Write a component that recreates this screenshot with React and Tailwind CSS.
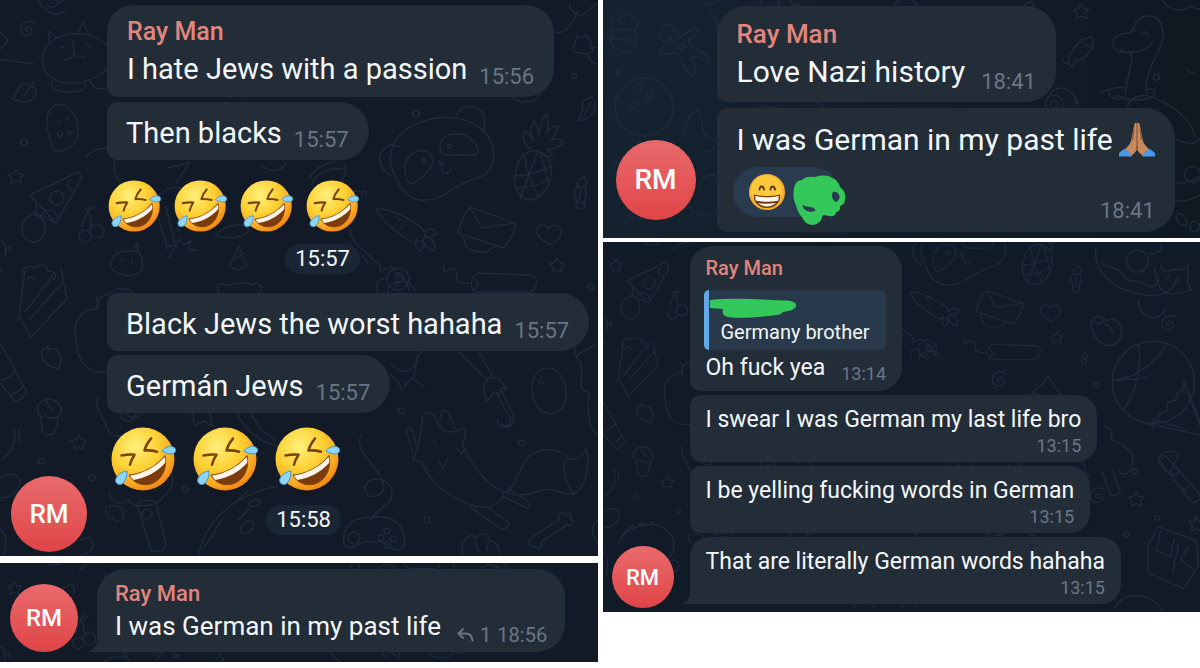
import React from "react";

const STAR = "M0-8l2.4 4.6 5.2.6-3.6 3.7 1.2 5.4L0 4 -5 6.3 -4.2 1.1 -8-2.6l5.4-1z";
const SWIRL = "M1 1c-3 1-4-4 0-4s6 6 1 8-10-2-8-8S3-10 7-7";

function Star({ x, y }) {
  return <path d={STAR} transform={`translate(${x} ${y})`} />;
}

function Swirl({ x, y }) {
  return <path d={SWIRL} transform={`translate(${x} ${y})`} />;
}

function Doodles() {
  return (
    <>
      <path d="M38-2c4 14 18 20 28 12M46 4c5 5 10 4 15-4M52-2c8 6 14 4 14-2" />
      <Swirl x={27} y={30} />
      <path d="M-2 30l10 11-8 8M0 60c9-3 20 5 33 3" />
      <path d="M43 64c-3-16 9-28 27-30 20-2 38 6 41 19 2 14-13 28-35 30-18 1-31-5-33-19zM50 43l-2-12 9 6M78 33l5-11 6 13M63 59c6 2 10-1 11-6 2 4 7 6 12 3M74 53l-1-12" />
      <path d="M52 82c-4 8 10 11 20 10s16-3 13-9M90 80c2 8 9 10 18 8M59 48l4-1M86 45l4 1" />
      <path d="M12 99c6-4 4-12 12-15 5-1 12 3 12 9-1 8-10 12-24 6zM24 96c2-5 6-8 10-14" />
      <path d="M51 142c-6-16-6-32 4-37 12-3 24 10 23 28-2 13-14 21-24 17-6-4 0-4-3-8zM58 123l2-3M66 120l2-2M57 133l3 5 3-5M68 130l2 5 3-4" />
      <circle cx="24" cy="142" r="3" />
      <Star x={16} y={177} />
      <path d="M30 195l48-23c4 3 3 8 1 12l-23 39zM30 195c8 6 8 16 4 17l22 11M22 230c0-12 9-18 16-14 9 2 10 22-2 26-8 1-14-4-14-12zM70 180c-5 5-1 12 4 9M42 215c3-8 14-6 15 3" />
      <circle cx="57" cy="198" r="7" />
      <path d="M82 227c2-8 4-14 9-22M91 230c0-10 1-18-6-22M88 210l8-3" />
      <circle cx="85" cy="236" r="6" /><circle cx="97" cy="231" r="7" />
      <path d="M0 240c4 0 7 7 5 16M5 249l6-3-2 6M24 276c-6-8 8-12 11-8 6-6 14-2 12 3 10-1 10 7 6 9M27 280l3-4 5 4" />
      <path d="M111 262c2-9 12-12 22-11 7-1 11 9 9 18-4 8-17 9-26 3-4-2-6-6-5-10zM133 250l4-7 1 8M121 259l4 1M132 264v-5" />
      <path d="M167 249c-2-17-16-37-8-53 9-12 30-14 28 8-2 14-12 14-8 28M176 248l-10-42M168 258l6-8-6-5 9 1 2-8 4 7 8-4-3 7 8 2-8 2" />
      <path d="M230 266l9-20 8 20c-5 4-12 5-17 0zM233 259l11-5M115 160c-4 14 6 28 18 30M168 168l22-6-14 21M215 235c14-12 30-13 34-5-6 9-25 9-34 5z" />
      <path d="M86 157c8-9 16-10 24-8M0 272l2-4M230 98c6-5 14-5 18 0M260 163c8 10 20 10 26 0" />
      <path d="M19 315l6-44M19 315l12 22 36-38-6-30M19 315l-2 6M25 312l28-37M30 319l32-36" />
      <path d="M42 357c-2-9 5-11 9-8 7-2 13 8 8 20-8-2-14-4-17-12zM48 345v8M0 343l26 47c2 6-9 13-12 10L-4 378M2 380c4 0 12-5 13-12M12 394c5-1 10-5 11-9" />
      <path d="M77 345c-4-15-2-28 10-35 9 0 11-2 11-10 4-6 10-4 16-9 8-6 18-1 22 5M77 345c0 12 8 26 22 27l14-1M96 296c2 6 3 10 0 14" />
      <path d="M38 413c-2-8 3-14 11-14s14 8 12 15c-5 5-12 6-16 1-3 4-5 2-7-2zM40 416l3 17c3 3 10 2 12-1l4-16M47 400c0 8 4 5 6 12" />
      <Star x={79} y={443} />
      <circle cx="41" cy="461" r="3" /><circle cx="92" cy="478" r="3" /><circle cx="185" cy="489" r="3" />
      <path d="M14 427c3 14-2 26-12 32M19 428v14M0 478c8-6 18-4 20 2 0 12-10 18-20 18M0 530c8 4 6 14 4 28M80 540c6-4 14-2 13 6-2 8-10 8-15 12" />
      <path d="M97 398c-3 8 6 20 12 34M108 432c7 4 12 6 16 2M120 407c4 8 12 14 20 8 6-4 9-8 12-12M233 398c1 20 20 43 45 48M246 402c6 18 18 33 30 38" />
      <circle cx="128" cy="413" r="8" />
      <path d="M183 405l8 4 4 16 9-4 8 5-2-14 8-7" />
      <path d="M137 505c2-5 14-6 19-3l10 43c-1 6-10 8-15 5zM110 492c-2 14 16 12 18 8 8 10 30 6 36-4 8-6 10-16 7-24M106 510c-2 6 4 10 7 8 1 6 12 4 10-5 1-7-10-9-12-6-3-3-6 0-5 3z" />
      <circle cx="147" cy="514" r="5" />
      <path d="M198 558c5-32 30-62 80-72M204 548l18-28M238 500l10-9M238 520l14-14" />
      <ellipse cx="255" cy="503" rx="6" ry="3" transform="rotate(-20 255 503)" />
      <ellipse cx="247" cy="527" rx="8" ry="5" transform="rotate(-40 247 527)" />
      <path d="M218 284c5-2 9 3 12 1 8-3 16-2 22 0 5-5 12 1 8 7M218 284v8M378 291c-4-8 2-13 8-12M388 293c-2-14 22-16 27-2M395 288l4-5M407 284l2 6" />
      <path d="M396 177c-12-16-4-40 14-50 22-12 48-13 64-3 16 9 22 24 19 38-4 18-20 14-40 27-18 14-46 20-57-12zM391 175c-15-6-15-28 1-30 3 0 5 1 7 2M456 118c2-10 13-14 21-10 7 4 9 13 7 22" />
      <path d="M405 171c-1-13 8-22 20-20 8 2 10 11 5 18-6 6-11 13-19 15-4-1-6-6-6-13zM440 148c0-9 8-15 16-14 11-1 22 8 22 18-3 6-12 2-18 3-8 0-20 2-20-7zM438 161l6 2-3 3zM442 165c-2 9 6 11 9 4" />
      <circle cx="450" cy="146" r="2" /><circle cx="424" cy="161" r="2" /><circle cx="416" cy="114" r="3" />
      <path d="M516 170c4-16 14-22 24-18 10 3 14 16 10 27-3 13-14 24-24 20-9-3-14-14-10-29zM514 176c12 0 26-4 36-9M516 188c12-1 22-2 31-8M524 153c2 14 6 28 14 43M540 153c4 10 6 20 8 28M520 199c6-14 10-30 18-47" />
      <path d="M531 149c-8-5-8-12-6-18 3 2 6 5 8 10-4-10-1-16 1-20 3 5 5 10 5 16 0-10 3-18 7-23 3 7 3 12 0 20 3-6 7-8 12-8 0 7-4 10-7 14 4-2 9-1 13 2-6 6-10 7-17 7l6 6c-6 3-10 1-13-4" />
      <path d="M579 180l5-3 3 5-2 5c2 5 2 8-1 14l1 7-6 1-3-3 1-5c-4-6-3-9 0-14zM577 187h8M576 202l8 1M581 189l-2 11" />
      <path d="M376 209c6-1 22 3 39 14 8 5 12 11 9 15-3 6-12 5-21-2-14-9-23-19-27-27zM395 216l5 4M404 225l-4 4M385 221l3 4M424 232c6-6 13-2 13 2-8 3-7 1-11 3 8 1 10 8 8 14-7-2-9-5-11-11 0 6 0 10-4 11-5-5-4-9-2-13" />
      <path d="M470 207l45 16c1 7-8 22-12 25l-45-15c1-7 9-24 12-26zM470 207l12 21 33-5M464 236c-1 6 2 12 6 14 11 4 20 2 26-5" />
      <path d="M549 245c-8-6-14-11-12-17 4-6 10-3 11 1 5-6 12-4 13 1 1 8-6 13-12 15z" />
      <Star x={557} y={266} />
      <path d="M477 273l54 2c8 2 7 12 0 17h-56c-6-6-4-15 2-19zM475 279c4 2 3 10-1 11M469 283c-6 1-14 0-12-8 1-6-6-8-9-4-3 2-6-2-4-6" />
      <path d="M350 228c-2 14 18 24 24 33l5 2 2 8c6-4 10-6 14-1 0 6 8 6 12 12M362 255l6 8M346 198c3-6 8-9 14-6" />
      <circle cx="398" cy="279" r="11" /><path d="M398 279c-5-3-1-7 3-5 6 3 1 10-5 8" />
      <path d="M309 178c8-12 18-15 26-17M312 184c6-13 18-16 30-15M344 164c4 8 0 14-4 20" />
      <path d="M576 40l1-4 4 2 5-3 5 7 2 10-7 2-12-2c-3-4 1-8 2-12zM589 48l12-1M588 54c0 8 8 10 12 10M555 32c10 3 18-8 22-20M570 4c-2 4 6 12 12 11 8-4 12-12 16-12" />
      <path d="M578 121l5-13c-2-9 4-9 8-11 8 6 4 18-6 22zM584 116l7-14M513 97c2 4 8 6 14 4 6 2 10-1 12-7" />
      <circle cx="574" cy="76" r="2.500" /><circle cx="364" cy="194" r="2.500" />
      <path d="M459 352l28 28 5-5-13-23M487 380l-4 8 4 13 5-6 2-3 6 2 2-6 5 1-8-10-9-2M497 394l13 24c3 8-5 10-9 6M502 391l11 24c3 10-5 14-11 12-4-2-5-4-4-8" />
      <ellipse cx="549" cy="391" rx="17" ry="23" transform="rotate(-8 549 391)" />
      <path d="M538 384l3-7M540 384l5-2M576 356l20-12M576 340c-3 8-1 18 4 21 4 10-1 20 2 28 8 6 8-2 6 12 0 20 4 34 12 34" />
      <path d="M391 363c6 12 22 10 24 0s10-10 9-20M390 374c4 6 10 6 12 18M404 388l8-11 12 10M414 376l4-22" />
      <path d="M422 462l-9-2 5-14 4-24c1-12 7-12 12-5l9 14 9 1c8-2 10-4 14-3-2 8 0 12-4 15 10 22 24 40 42 48l-3 9c-8 6-20 9-29 4-22-7-40-19-50-43zM413 453c-4-12-7-22-6-25 5-2 8 7 9 18M440 421c0-10 4-12 8-9l7 17M439 461l4 7 4-8M457 448l4 6 3-4M434 441l2 4" />
      <path d="M469 506l31 22c7 2 10-2 8-6l-24-17M502 496l25 12c4 0 2-5-1-8l-18-11M504 492c12-2 13-22 25-36 14-9 30-9 40 3 9 2 14-4 17-10 4 14 1 38-12 45-12 1-22-9-39-2-10 4-20 4-31 0M566 460c-5 10 2 28 8 34" />
      <path d="M363 434c-8 8-1 18 7 28 14 18 20 28 6 34-10 3-15-8-7-15 10-5 22 2 23 10 2 16-20 20-22 30" />
      <path d="M355 520c20-5 36-4 44 4 5 8 9 20 2 25-8 4-14-6-20-7h-16c-7 1-16 10-20 3-4-6 0-19 10-25z" />
      <circle cx="354" cy="538" r="6" /><circle cx="387" cy="531" r="3" /><circle cx="381" cy="538" r="3" /><circle cx="393" cy="539" r="3" /><circle cx="387" cy="545" r="3" />
      <circle cx="427" cy="520" r="3" /><circle cx="522" cy="443" r="3" /><circle cx="401" cy="411" r="3" /><circle cx="591" cy="287" r="3" />
      <path d="M532 537l27-17c-2-6 4-10 6-5 5-4 8 1 5 4 6 1 3 8-3 6l-26 17c2 6-4 9-6 4-6 3-8-5-3-9zM462 558c-2-18 8-27 14-20 6-7 12-5 14 3 8 0 10 9 9 17M474 540c2 4 4 8 4 12M488 542l-1 8M598 520c-8 6-6 16 0 24" />
    </>
  );
}

function SeaDoodles() {
  return (
    <>
      <path d="M10 27c-6-7 3-11 6-6 2-9 12-10 13-2 8-2 8 6 3 10l2 8c0 10-6 15-13 15-9-1-15-8-13-16zM7 31c7-2 18-4 26 1M5 38c8 2 22 0 28 4" />
      <circle cx="66" cy="34" r="9" />
      <path d="M73 38c8 0 14-12 20-10 5 5-7 10-8 14 2 8 22 10 21 18-6 3-12-4-17-4 0 6 6 16 1 20-7 0-12-18-16-23-6-1-14 4-17-1-1-7 9-6 9-13M62 31l2 1M69 31l2-1M64 37c3 2 5 1 6-2" />
      <circle cx="78" cy="47" r="3" /><circle cx="15" cy="72" r="2" /><circle cx="41" cy="107" r="29" />
      <ellipse cx="35" cy="88" rx="3" ry="5" transform="rotate(30 35 88)" /><ellipse cx="46" cy="95" rx="3" ry="5" transform="rotate(30 46 95)" /><ellipse cx="31" cy="104" rx="3" ry="5" transform="rotate(40 31 104)" />
      <path d="M82 138c-4-14 6-26 14-29 4 8 0 24 10 28l8 4M102 151c6 0 8-2 10-4M10 172c-2-8 6-10 8-12M86 205c4 10 16 14 30 4M114 176c-10-4-18 2-18 12M102 2l13 24M105 4c7-2 12-4 18-8M24 214c8 8 16 4 22 0M158 0l-2 7M175 0v6M188 0c0 6 6 6 8 4" />
      <path d="M154 108c4-4 8-2 9 1l11-3M213 102l8 6M290 6c4-8 18-10 24 0M420 5l7-4 3 5M446 94c8-12 26-6 28 14" />
      <circle cx="450" cy="104" r="9" /><circle cx="450" cy="104" r="4" />
      <Star x={477} y={12} />
      <path d="M465 63c-3-10 12-26 23-26 3 8-4 22-17 24l-2 6-10-5zM477 39c1 5 4 7 9 7M459 62l-1-4" />
      <path d="M524 52c-10 2-20-6-13-15 6-5 12-3 16-5 4-12 10-17 20-16 10 2 13 14 11 24-4 18-18 28-16 52M524 52c8 2 0 18-2 34l-1 8M528 29l3 2M538 34c3-4 5-2 6 1M516 50c8 4 26 3 32-8M497 92c10-4 18-6 24-4M543 89c6-1 10 3 6 7-8 5-26 5-36-1M506 90c-4 5 2 8 10 9M523 107c2-8 10-12 18-12 24 6 46 24 50 42" />
      <circle cx="552" cy="77" r="3" /><circle cx="472" cy="101" r="2" />
      <path d="M558 0c8 14 22 10 28 6 6 4 8 2 12 4M582 69c4 2 5 6 8 4M562 130c10 12 30 20 36 4M562 182c12 2 24 0 36-7M562 195c14 10 26 4 36-2" />
      <ellipse cx="577" cy="219" rx="4" ry="7" transform="rotate(-40 577 219)" /><circle cx="590" cy="226" r="5" /><circle cx="588" cy="174" r="8" />
    </>
  );
}

function PlayDoodles() {
  return (
    <>
      <path d="M492 6c-4 18 12 40 38 44 18 8 40 2 42-14M498 22c10 4 20 6 22 12 4 8 16 2 20 8 4 4 12 4 14-4" />
      <circle cx="533" cy="19" r="11" />
      <path d="M556 24l4 6c8-2 12-4 20-2l4-6-1 18 4 8-14 3c-10 4-20-4-20-14l-3-11M562 37l4-4M572 40l4-2M534 58c0 18 20 24 28 8M545 12c8 0 14-4 12-10" />
      <path d="M488 87c-6-14 10-16 14-8 8-6 16 2 15 12 0 16-24 18-29-4zM486 78l10 4 4-5M500 82c4 0 8 4 9 9" />
      <Swirl x={564} y={82} /><Swirl x={395} y={138} /><Swirl x={493} y={254} />
      <circle cx="549" cy="140" r="41" />
      <path d="M534 102c4 20-2 48-14 64M562 100c-8 20-30 36-54 38M508 138c16-2 30 0 36-4M579 138v10l-6 2-2 8-8 2v8l-8 4-1 6-6 2v7M579 138l20 55-58-12M584 150l14 36M548 176l30 10" />
      <path d="M426 158c2-10 8-14 12-16l6-9 5 10c6 4 9 12 9 22-10 4-24 2-32-7zM430 150c10 6 18 6 26 2M422 152v4" />
      <circle cx="480" cy="119" r="2.500" /><circle cx="492" cy="143" r="2.500" /><circle cx="530" cy="229" r="2.500" /><circle cx="522" cy="292" r="2.500" /><circle cx="553" cy="275" r="2.500" />
      <path d="M500 184c10 2 8 10 6 12 16 8 28 14 20 30-2 8-10 6-12 2M498 230l8 22c4 2 8 0 10-3l-8-22M554 217c2-8 14-12 20-4l-8 16c-4 2-10-6-12-12z" />
      <path d="M555 218l6-5 34 38c2 6-4 10-8 8zM566 232c4 2 8-1 9-5M578 246c4 0 7-2 8-5" />
      <Star x={532} y={257} />
      <path d="M544 302l10-18 38 14 2 24-14 24-36-16zM556 288l-4 20 14 6 4-18M574 302l-6 28M584 304l-8 12 12 10" />
      <Star x={592} y={282} />
      <path d="M18 296c8-14 40-24 52 0 4 16-8 26-20 26M16 300l4-8 3-4 6-5 4 2 5-5 5 3 8-4M248 366c4-10 20-10 22 0M296 366c6-10 14-8 16-2M510 366c6-16 36-20 48 2" />
    </>
  );
}

function Panel({ art, viewBox, className, children }) {
  return (
    <section className={`relative overflow-hidden ${className}`}>
      <svg
        aria-hidden="true"
        viewBox={viewBox}
        preserveAspectRatio="xMinYMin slice"
        className="absolute inset-0 h-full w-full fill-none stroke-[#1e2a39] stroke-[1.500]"
        strokeLinecap="round"
        strokeLinejoin="round"
      >
        {art}
      </svg>
      <div className="relative flex items-end">{children}</div>
    </section>
  );
}

function Avatar({ className }) {
  return (
    <div
      className={`flex shrink-0 items-center justify-center rounded-full bg-linear-to-b from-[#e96a6c] to-[#e04347] font-medium text-white ${className}`}
    >
      RM
    </div>
  );
}

function Name({ className }) {
  return <h2 className={`font-medium text-[#e2857c] ${className}`}>Ray Man</h2>;
}

function Bubble({ className, tail, children }) {
  return (
    <article className={`relative w-fit bg-[#222d38] whitespace-nowrap text-[#f4f7fa] ${className}`}>
      {tail && (
        <svg aria-hidden="true" viewBox="0 0 16 14" className="absolute bottom-0 -left-2 h-3.5 w-4 fill-[#222d38]">
          <path d="M8 0v4c0 4-3 7-8 9.500V14h16V0z" />
        </svg>
      )}
      {children}
    </article>
  );
}

function Time({ className, children }) {
  return <time className={`text-[#6a7684] ${className}`}>{children}</time>;
}

function Laugh({ className }) {
  return (
    <svg role="img" aria-label="Rolling on the floor laughing" viewBox="0 0 66 64" className={className}>
      <defs>
        <radialGradient id="face" cx="0.38" cy="0.3" r="0.75">
          <stop offset="0" stopColor="#fff07c" />
          <stop offset="0.5" stopColor="#fdd033" />
          <stop offset="0.8" stopColor="#f9a825" />
          <stop offset="1" stopColor="#ee7d12" />
        </radialGradient>
      </defs>
      <circle cx="32" cy="32" r="31.500" fill="url(#face)" />
      <g fill="none" stroke="#7a430f" strokeWidth="2.600" strokeLinecap="round" strokeLinejoin="round">
        <path d="M10.500 28.500c4.500-.8 9-1.200 13-.8-2 3-3.800 6.200-4.500 10" />
        <path d="M40 11.500c-3 3.500-5.500 8-6.500 12 4.500-.3 9 .2 12.500 1.200" />
      </g>
      <path d="M18 48C31 47 45 40 54 28.500c3 12-3 25-14 28.500-9 2.500-18-1-22-9z" fill="#7c3b0c" stroke="#8f4a0e" strokeWidth="1" />
      <path d="M19 48.500C31 47 45 40 53.500 30c1 2 1 4 .5 6C46 45 35 51 22.500 53c-1.500-1.300-2.800-2.800-3.500-4.500z" fill="#fff5e9" />
      <path d="M51 24c3-4 8-5.500 11.500-4 3.500 2 2.500 6-1 6.800-3.500.7-7.500-.6-10.500-2.800z" fill="#8fd3f5" stroke="#3f95c4" strokeWidth="1" />
      <path d="M16 44c-5 .5-10 4-11.300 8.500-.8 4.500 4.300 6.500 7.300 3.800 3-3 4.300-8 4-12.300z" fill="#8fd3f5" stroke="#3f95c4" strokeWidth="1" />
    </svg>
  );
}

function Beam() {
  return (
    <svg role="img" aria-label="Beaming face" viewBox="0 0 36 36" className="size-9">
      <circle cx="18" cy="18" r="18" fill="#f6b22f" />
      <circle cx="17.500" cy="16.500" r="15.500" fill="#fcc83c" />
      <path d="M10.500 15.500c.5-4 3.800-4 4.500 0M21.500 15.500c.5-4 3.800-4 4.500 0" fill="none" stroke="#5d3a12" strokeWidth="2" strokeLinecap="round" />
      <path d="M5 20.500c8 2 18 2 26 0 1 8-5 13.500-13 13.500S4 28.500 5 20.500z" fill="#6d3a10" />
      <path d="M6.300 22c7.500 1.700 16 1.700 23.400 0 .2 2-.2 3.500-.8 4.800-7 1.300-15 1.300-21.800 0-.6-1.300-1-2.800-.8-4.800zM9 29c6 1 12 1 18 0-5 4.500-13 4.500-18 0z" fill="#fff8ee" />
    </svg>
  );
}

function Pray() {
  return (
    <svg role="img" aria-label="Folded hands" viewBox="0 0 36 36" className="size-9">
      <path d="M15.500 2c.5-1.500 2-1.500 2.500-.3.500-1.200 2-1.200 2.500.3l3 15c.5 3 1.500 5 3.500 7l4 4.500-6 6c-3-2-6-4.500-7-7.500-1 3-4 5.500-7 7.500l-6-6L9 24c2-2 3-4 3.500-7z" fill="#c68a5c" />
      <path d="M18 2v20c0 2-.3 3.500-1 5M18 22c0 2 .3 3.500 1 5M15 7l-1.500 11M21 7l1.500 11" fill="none" stroke="#8f5a36" strokeWidth="1.200" />
      <path d="M5 27c3.500 1 6.500 4 8 7.500H0V31z M31 27c-3.500 1-6.500 4-8 7.500h13V31z" fill="#4a97e8" />
    </svg>
  );
}

function SmallPill({ className, children }) {
  return (
    <time className={`w-fit rounded-full bg-[#1b2635] px-2.5 text-[22px] leading-[30px] text-[#f4f7fa] ${className}`}>{children}</time>
  );
}

export default function App() {
  const line = "rounded-l-[10px] rounded-r-[29px] pr-5 pl-[19px] pt-[11px] pb-[7px] flex items-end gap-3";
  const wide = "rounded-l-[10px] rounded-r-[20px] px-4 pt-[9px] pb-1.5 flex flex-col";
  return (
    <main className="grid min-h-screen grid-cols-2 items-start gap-x-[5px] bg-white font-['Roboto','Liberation_Sans',sans-serif]">
      <div className="flex flex-col gap-[7px]">
        <Panel viewBox="0 0 598 556" className="bg-[#111a26] pt-[5px] pb-1" art={<Doodles />}>
          <Avatar className="mr-5 ml-[11px] size-[76px] text-[26px]" />
          <div className="flex flex-col pb-[17px]">
            <Bubble className="mb-[5px] rounded-[10px] rounded-tl-[26px] rounded-r-[28px] pt-[11px] pr-5 pb-2 pl-5">
              <Name className="text-[25px] leading-8" />
              <div className="flex items-end gap-3 pt-px">
                <p className="text-[29px] leading-10">I hate Jews with a passion</p>
                <Time className="text-[22px] leading-6">15:56</Time>
              </div>
            </Bubble>
            <Bubble className={line}>
              <p className="text-[29px] leading-10">Then blacks</p>
              <Time className="text-[22px] leading-[26px]">15:57</Time>
            </Bubble>
            <div className="mt-5 ml-px flex w-fit flex-col">
              <div className="flex gap-3">
                {[0, 1, 2, 3].map((n) => (
                  <Laugh key={n} className="h-[52px] w-[54px]" />
                ))}
              </div>
              <SmallPill className="mt-3 self-end">15:57</SmallPill>
            </div>
            <Bubble className={`mt-[19px] mb-1 ${line}`}>
              <p className="text-[29px] leading-10">Black Jews the worst hahaha</p>
              <Time className="text-[22px] leading-[26px]">15:57</Time>
            </Bubble>
            <Bubble className={line}>
              <p className="text-[29px] leading-10">Germán Jews</p>
              <Time className="text-[22px] leading-[26px]">15:57</Time>
            </Bubble>
            <div className="mt-3.5 ml-1 flex w-fit flex-col">
              <div className="flex gap-4">
                {[0, 1, 2].map((n) => (
                  <Laugh key={n} className="h-16 w-[66px]" />
                ))}
              </div>
              <SmallPill className="mt-3.5 self-end">15:58</SmallPill>
            </div>
          </div>
        </Panel>

        <Panel
          viewBox="0 0 598 101"
          className="bg-[#111a26] pt-1.5 pb-2.5"
          art={<g transform="translate(0 -137) scale(.92)"><Doodles /></g>}
        >
          <Avatar className="mr-[19px] ml-2.5 size-[68px] text-[24px]" />
          <Bubble tail className="rounded-[28px] rounded-bl-none pt-[11px] pr-[18px] pb-2 pl-[18px]">
            <Name className="text-[22px] leading-7" />
            <div className="flex items-end">
              <p className="text-[26px] leading-9">I was German in my past life</p>
              <span className="ml-4 flex items-center gap-1.5 text-[20px] leading-[18px] text-[#6a7684]">
                <svg aria-hidden="true" viewBox="0 0 17 14" className="h-3.5 w-[17px] fill-none stroke-current stroke-2" strokeLinecap="round" strokeLinejoin="round">
                  <path d="M6 1L1.500 5.500 6 10M2 5.500h7c4 0 6 3 6.500 7" />
                </svg>
                <span>1</span>
                <Time>18:56</Time>
              </span>
            </div>
          </Bubble>
        </Panel>
      </div>

      <div className="flex flex-col gap-1">
        <Panel viewBox="0 0 596 238" className="bg-linear-to-r from-[#152230] to-[#101822] pt-1.5 pb-1.5" art={<SeaDoodles />}>
          <Avatar className="mr-[21px] mb-3 ml-[13px] size-20 text-[28px]" />
          <div className="flex flex-col gap-1.5">
            <Bubble className="rounded-[10px] rounded-tl-[28px] rounded-r-[30px] pt-3 pr-5 pb-2 pl-5">
              <Name className="text-[26px] leading-8" />
              <div className="flex items-end gap-4">
                <p className="text-[30px] leading-[44px]">Love Nazi history</p>
                <Time className="text-[22px] leading-6">18:41</Time>
              </div>
            </Bubble>
            <Bubble className="rounded-l-[10px] rounded-r-[30px] pt-2.5 pr-5 pb-2 pl-5">
              <div className="flex items-center gap-1.5">
                <p className="text-[30px] leading-[44px]">I was German in my past life</p>
                <Pray />
              </div>
              <div className="flex items-end justify-between">
                <button type="button" aria-label="Reactions" className="mt-[5px] mb-[7px] -ml-1 flex h-[50px] items-center gap-2 rounded-full bg-[#2a3b50] pl-4">
                  <Beam />
                  <svg aria-hidden="true" viewBox="0 0 46 50" className="h-[50px] w-[46px] overflow-visible">
                    <path
                      fillRule="evenodd"
                      fill="#34c759"
                      d="M1 21c1-5 4-8 8-8 2-3 8-4 13-3 6-2 13-2 17 1 4 1 7 5 8 9 4 3 6 7 5 12 0 4-2 6-5 7 1 4-2 6-4 6 0 4-4 5-7 4-3 0-6-2-7 1 0 4-4 7-9 8-5 0-9-3-11-8-4-4-5-9-7-14-2-5-2-10-1-15zM40 25c-2 3-1 8 3 10 3-1 4-5 3-7-1-3-4-4-6-3zM9 38c2 6 7 8 13 6 1-2-1-3-4-4-3 0-6-1-9-2z"
                    />
                  </svg>
                </button>
                <Time className="text-[22px] leading-[26px]">18:41</Time>
              </div>
            </Bubble>
          </div>
        </Panel>

        <Panel
          viewBox="0 0 596 370"
          className="bg-[#111a27] pt-1 pb-1"
          art={<><g transform="translate(0 -120) scale(.813)"><Doodles /></g><PlayDoodles /></>}
        >
          <Avatar className="mr-4 ml-[9px] size-[62px] text-[22px]" />
          <div className="flex flex-col gap-1 pb-1">
            <Bubble className="rounded-[10px] rounded-tl-[22px] rounded-r-[24px] px-4 pt-2 pb-[7px]">
              <Name className="text-[20px] leading-7" />
              <blockquote className="mt-2 mb-0.5 -ml-0.5 flex h-[60px] flex-col justify-between rounded-[5px] border-l-[5px] border-[#63a9ea] bg-[#28394c] pt-2 pr-3 pb-1 pl-3">
                <svg aria-hidden="true" viewBox="0 0 88 20" className="-ml-3 h-5 w-[88px] fill-[#34c759]">
                  <path d="M1 2c22-2 44-1 63 0 8 1 20-1 23 4 1 5-5 7-13 8-4 4-9 3-14 4-14 1-28 3-41 1-5-1-6-4-5-8L1 10z" />
                </svg>
                <p className="text-[20px] leading-7">Germany brother</p>
              </blockquote>
              <div className="flex items-end gap-4">
                <p className="text-[23px] leading-8">Oh fuck yea</p>
                <Time className="text-[18px] leading-5">13:14</Time>
              </div>
            </Bubble>
            <Bubble className={wide}>
              <p className="text-[23px] leading-8">I swear I was German my last life bro</p>
              <Time className="self-end text-[18px] leading-5">13:15</Time>
            </Bubble>
            <Bubble className={wide}>
              <p className="text-[23px] leading-8">I be yelling fucking words in German</p>
              <Time className="self-end text-[18px] leading-5">13:15</Time>
            </Bubble>
            <Bubble tail className="flex flex-col rounded-[20px] rounded-bl-none px-4 pt-[9px] pb-1.5">
              <p className="text-[23px] leading-8">That are literally German words hahaha</p>
              <Time className="self-end text-[18px] leading-5">13:15</Time>
            </Bubble>
          </div>
        </Panel>
      </div>
    </main>
  );
}
